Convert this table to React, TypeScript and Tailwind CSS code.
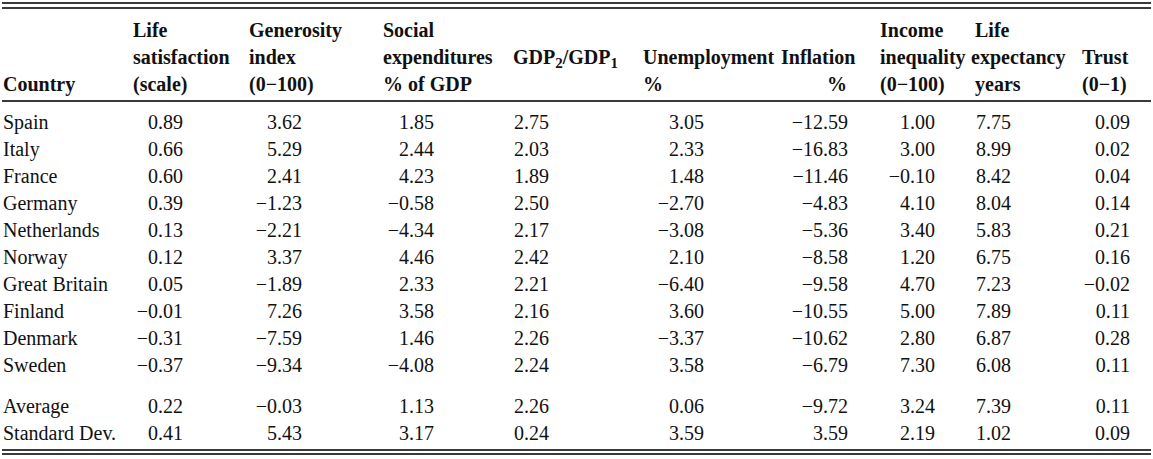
import React from "react";

const M = "\u2212";

type Row = [string, ...string[]];

const rows: Row[] = [
  ["Spain", "0.89", "3.62", "1.85", "2.75", "3.05", M + "12.59", "1.00", "7.75", "0.09"],
  ["Italy", "0.66", "5.29", "2.44", "2.03", "2.33", M + "16.83", "3.00", "8.99", "0.02"],
  ["France", "0.60", "2.41", "4.23", "1.89", "1.48", M + "11.46", M + "0.10", "8.42", "0.04"],
  ["Germany", "0.39", M + "1.23", M + "0.58", "2.50", M + "2.70", M + "4.83", "4.10", "8.04", "0.14"],
  ["Netherlands", "0.13", M + "2.21", M + "4.34", "2.17", M + "3.08", M + "5.36", "3.40", "5.83", "0.21"],
  ["Norway", "0.12", "3.37", "4.46", "2.42", "2.10", M + "8.58", "1.20", "6.75", "0.16"],
  ["Great Britain", "0.05", M + "1.89", "2.33", "2.21", M + "6.40", M + "9.58", "4.70", "7.23", M + "0.02"],
  ["Finland", M + "0.01", "7.26", "3.58", "2.16", "3.60", M + "10.55", "5.00", "7.89", "0.11"],
  ["Denmark", M + "0.31", M + "7.59", "1.46", "2.26", M + "3.37", M + "10.62", "2.80", "6.87", "0.28"],
  ["Sweden", M + "0.37", M + "9.34", M + "4.08", "2.24", "3.58", M + "6.79", "7.30", "6.08", "0.11"],
];

const summary: Row[] = [
  ["Average", "0.22", M + "0.03", "1.13", "2.26", "0.06", M + "9.72", "3.24", "7.39", "0.11"],
  ["Standard Dev.", "0.41", "5.43", "3.17", "0.24", "3.59", "3.59", "2.19", "1.02", "0.09"],
];

const numW = [
  "w-[50px]",
  "w-[53px]",
  "w-[51px]",
  "w-[36px]",
  "w-[61px]",
  "w-[67px]",
  "w-[55px]",
  "w-[36px]",
  "w-[48px]",
];

const gridCols =
  "grid grid-cols-[130px_116px_134px_130px_130px_138px_99px_95px_107px_69px]";

function DataRow({ r }: { r: Row }) {
  return (
    <div className={`${gridCols} h-[27px] leading-[27px]`}>
      <div className="whitespace-nowrap">{r[0]}</div>
      {r.slice(1).map((v, i) => (
        <div key={i} className={`${numW[i]} text-right whitespace-nowrap`}>
          {v}
        </div>
      ))}
    </div>
  );
}

function H({ lines }: { lines: React.ReactNode[] }) {
  return (
    <div className="flex flex-col">
      {lines.map((l, i) => (
        <div key={i} className="h-[27px] leading-[27px] whitespace-nowrap">
          {l === "" ? "\u00a0" : l}
        </div>
      ))}
    </div>
  );
}

export default function App() {
  return (
    <div
      className="w-[1153px] h-[459px] bg-white text-[#111111] text-[20px] px-[2px] pt-[2px]"
      style={{ fontFamily: '"Liberation Serif", "Times New Roman", serif' }}
    >
      <div className="h-[2px] bg-[#3a3a3a]" />
      <div className="h-[3px]" />
      <div className="h-[2px] bg-[#3a3a3a]" />
      <div className={`${gridCols} pl-[1px] pt-[8px] pb-[2px] font-bold`}>
        <H lines={["", "", "Country"]} />
        <H lines={["Life", "satisfaction", "(scale)"]} />
        <H lines={["Generosity", "index", "(0" + M + "100)"]} />
        <H lines={["Social", "expenditures", "% of GDP"]} />
        <H
          lines={[
            "",
            <span>
              GDP<sub>2</sub>/GDP<sub>1</sub>
            </span>,
            "",
          ]}
        />
        <H lines={["", "Unemployment", "%"]} />
        <H lines={["", "Inflation", <span className="pl-[46px]">%</span>]} />
        <H lines={["Income", "inequality", "(0" + M + "100)"]} />
        <H lines={["Life", <span className="ml-[-4px]">expectancy</span>, "years"]} />
        <H lines={["", "Trust", "(0" + M + "1)"]} />
      </div>
      <div className="h-[2px] bg-[#3a3a3a]" />
      <div className="pl-[1px] pt-[7px]">
        {rows.map((r, i) => (
          <DataRow key={i} r={r} />
        ))}
        <div className="h-[14px]" />
        {summary.map((r, i) => (
          <DataRow key={i} r={r} />
        ))}
      </div>
      <div className="h-[2px]" />
      <div className="h-[2px] bg-[#3a3a3a]" />
      <div className="h-[2px]" />
      <div className="h-[2px] bg-[#3a3a3a]" />
    </div>
  );
}
